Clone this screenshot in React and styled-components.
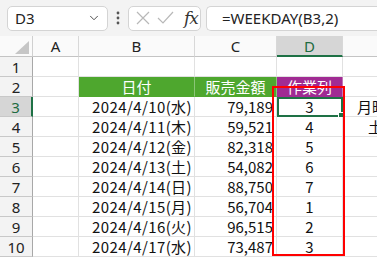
import React from "react";
import styled, { createGlobalStyle } from "styled-components";
import { ChevronDown } from "lucide-react";

const GlobalStyle = createGlobalStyle`
  html, body { margin: 0; padding: 0; background: #fff; }
  body {
    width: 377px;
    height: 257px;
    overflow: hidden;
    font-family: "Noto Sans CJK JP", "Noto Sans", sans-serif;
  }
`;

const rows = [
  { date: "2024/4/10(水)", sales: "79,189", work: "3", note: "月曜日", indent: 14 },
  { date: "2024/4/11(木)", sales: "59,521", work: "4", note: "土日", indent: 25 },
  { date: "2024/4/12(金)", sales: "82,318", work: "5" },
  { date: "2024/4/13(土)", sales: "54,082", work: "6" },
  { date: "2024/4/14(日)", sales: "88,750", work: "7" },
  { date: "2024/4/15(月)", sales: "56,704", work: "1" },
  { date: "2024/4/16(火)", sales: "96,515", work: "2" },
  { date: "2024/4/17(水)", sales: "73,487", work: "3" },
];

const App = () => {
  return (
    <>
      <GlobalStyle />
      <Bar>
        <NameBox>
          <span>D3</span>
          <ChevronDown size={14} strokeWidth={1.6} color="#444" />
        </NameBox>
        <Grip>
          <svg width="4" height="14" viewBox="0 0 4 14">
            <circle cx="2" cy="2" r="1.4" fill="#555" />
            <circle cx="2" cy="7" r="1.4" fill="#555" />
            <circle cx="2" cy="12" r="1.4" fill="#555" />
          </svg>
        </Grip>
        <FxBox>
          <svg width="14" height="14" viewBox="0 0 14 14">
            <path d="M1 1 L13 13 M13 1 L1 13" stroke="#b8b8b8" strokeWidth="1.2" fill="none" />
          </svg>
          <svg width="17" height="14" viewBox="0 0 17 14">
            <path d="M1 7 L6 12 L16 1" stroke="#b8b8b8" strokeWidth="1.2" fill="none" />
          </svg>
          <Fx>fx</Fx>
        </FxBox>
        <Formula>=WEEKDAY(B3,2)</Formula>
      </Bar>

      <Sheet>
        <Corner>
          <svg width="14" height="13" viewBox="0 0 14 13">
            <polygon points="14,0 14,13 0,13" fill="#c6c6c6" />
          </svg>
        </Corner>
        <ColHead>A</ColHead>
        <ColHead>B</ColHead>
        <ColHead>C</ColHead>
        <ColHead $sel>D</ColHead>
        <ColHead $last />

        <RowHead>1</RowHead>
        <Cell />
        <Cell />
        <Cell />
        <Cell />
        <Cell />

        <RowHead>2</RowHead>
        <Cell />
        <Cell $fill="#4ea72e" $align="center" $color="#fff">日付</Cell>
        <Cell $fill="#4ea72e" $align="center" $color="#fff">販売金額</Cell>
        <Cell $fill="#a02b93" $align="center" $color="#fff">作業列</Cell>
        <Cell />

        {rows.map((r, i) => (
          <React.Fragment key={i}>
            <RowHead $sel={i === 0}>{i + 3}</RowHead>
            <Cell />
            <Cell $align="right" $wide>{r.date}</Cell>
            <Cell $align="right">{r.sales}</Cell>
            <Cell $align="center" $active={i === 0}>
              {r.work}
              {i === 0 && <Handle />}
            </Cell>
            <Cell $indent={r.indent}>{r.note}</Cell>
          </React.Fragment>
        ))}

        <Highlight />
      </Sheet>
    </>
  );
};

export default App;

const Bar = styled.div`
  height: 36px;
  box-sizing: border-box;
  display: flex;
  align-items: center;
  padding-left: 7px;
  background: #f3f3f3;
`;

const NameBox = styled.div`
  width: 101px;
  height: 25px;
  box-sizing: border-box;
  display: flex;
  align-items: center;
  justify-content: space-between;
  padding: 0 6px 0 7px;
  background: #fff;
  border: 1px solid #d4d4d4;
  border-radius: 5px;
  font: 15px "Noto Sans", sans-serif;
  color: #222;
`;

const Grip = styled.div`
  display: flex;
  align-items: center;
  margin: 0 8px 0 8px;
`;

const FxBox = styled.div`
  width: 73px;
  height: 25px;
  box-sizing: border-box;
  display: flex;
  align-items: center;
  gap: 7px;
  padding-left: 7px;
  background: #fff;
  border: 1px solid #d4d4d4;
  border-radius: 5px;
`;

const Fx = styled.span`
  font: italic 17px "DejaVu Serif", "Liberation Serif", serif;
  color: #333;
  margin-left: 3px;
  letter-spacing: -1px;
`;

const Formula = styled.div`
  flex: 1;
  height: 25px;
  box-sizing: border-box;
  margin-left: 5px;
  padding-left: 15px;
  display: flex;
  align-items: center;
  background: #fff;
  border: 1px solid #d4d4d4;
  border-right: none;
  border-radius: 5px 0 0 5px;
  font: 15px "Noto Sans", sans-serif;
  color: #222;
`;

const Sheet = styled.div`
  position: relative;
  display: grid;
  grid-template-columns: 33px 46px 116px 82px 66px 1fr;
  grid-template-rows: 21px repeat(10, 20px);
`;

const Corner = styled.div`
  box-sizing: border-box;
  display: flex;
  align-items: flex-end;
  justify-content: flex-end;
  padding: 0 3px 2px 0;
  background: #fafafa;
  border-right: 1px solid #d0d0d0;
  border-bottom: 1px solid #c4c4c4;
`;

const ColHead = styled.div`
  box-sizing: border-box;
  display: flex;
  align-items: center;
  justify-content: center;
  background: ${(p) => (p.$sel ? "#d6d6d6" : "#fafafa")};
  border-right: ${(p) => (p.$last ? "none" : "1px solid #d8d8d8")};
  border-bottom: ${(p) => (p.$sel ? "2px solid #1e7145" : "1px solid #c4c4c4")};
  font: 15px "Noto Sans", sans-serif;
  color: ${(p) => (p.$sel ? "#1e6b41" : "#222")};
`;

const RowHead = styled.div`
  box-sizing: border-box;
  display: flex;
  align-items: center;
  justify-content: center;
  background: ${(p) => (p.$sel ? "#d6d6d6" : "#f3f3f3")};
  border-right: ${(p) => (p.$sel ? "2px solid #1e7145" : "1px solid #a8a8a8")};
  border-bottom: 1px solid #c8c8c8;
  font: 15px "Noto Sans", sans-serif;
  color: ${(p) => (p.$sel ? "#1e6b41" : "#222")};
`;

const Cell = styled.div`
  position: relative;
  box-sizing: border-box;
  display: flex;
  align-items: center;
  justify-content: ${(p) =>
    p.$align === "right" ? "flex-end" : p.$align === "center" ? "center" : "flex-start"};
  padding: 0 ${(p) => (p.$wide ? 2 : 3)}px 0 ${(p) => (p.$indent ? p.$indent : 3)}px;
  white-space: nowrap;
  overflow: visible;
  background: ${(p) => p.$fill || "#fff"};
  color: ${(p) => p.$color || "#111"};
  border-right: 1px solid ${(p) => (p.$fill ? "rgba(255,255,255,0.35)" : "#e1e1e1")};
  border-bottom: 1px solid ${(p) => (p.$fill ? p.$fill : "#e1e1e1")};
  outline: ${(p) => (p.$active ? "2px solid #1e7145" : "none")};
  outline-offset: -2px;
  font-size: 15px;
  letter-spacing: ${(p) => (p.$wide ? "0.4px" : "0")};
`;

const Handle = styled.span`
  position: absolute;
  right: -3px;
  bottom: -3px;
  width: 5px;
  height: 5px;
  background: #1e7145;
  border: 1px solid #fff;
`;

const Highlight = styled.div`
  position: absolute;
  left: 272px;
  top: 50px;
  width: 73px;
  height: 170px;
  box-sizing: border-box;
  border: 2px solid #ff0000;
  pointer-events: none;
`;
